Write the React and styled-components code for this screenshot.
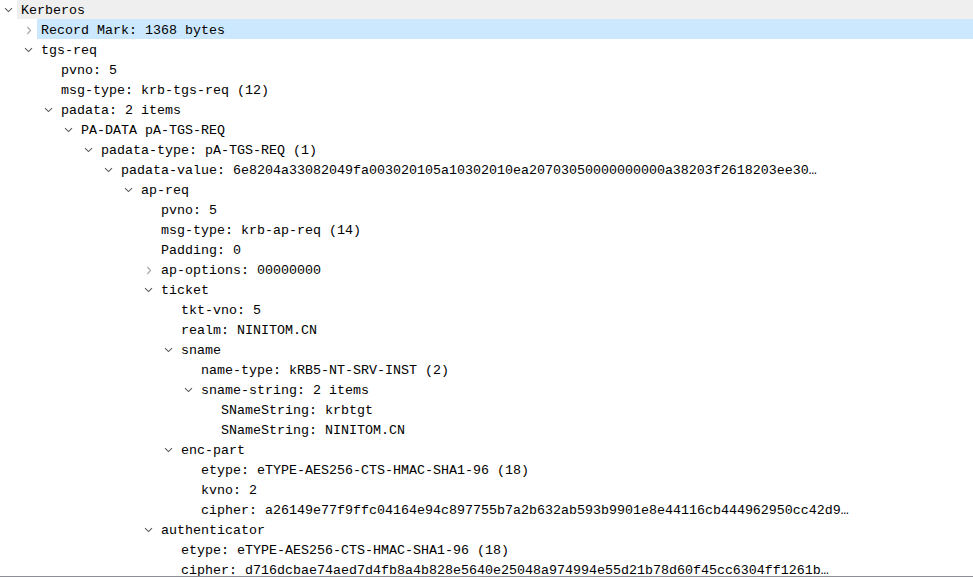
import styled, { createGlobalStyle } from "styled-components";

const GlobalStyle = createGlobalStyle`
  html, body {
    margin: 0;
    padding: 0;
    background: #ffffff;
  }
`;

const Tree = styled.div`
  width: 973px;
  height: 576px;
  overflow: hidden;
  border-bottom: 1px solid #8a8f99;
  background: #fff;
  font-family: "Liberation Mono", "DejaVu Sans Mono", monospace;
  font-size: 13.33px;
  color: #000;
`;

const Rows = styled.div`
  margin-top: -1px;
`;

const Row = styled.div`
  display: flex;
  align-items: center;
  height: 20px;
  padding-left: ${(p) => p.$level * 20}px;
  white-space: nowrap;
`;

const Toggle = styled.span`
  width: 17px;
  height: 20px;
  box-sizing: border-box;
  padding-top: 2px;
  flex: none;
  display: flex;
  align-items: center;
  justify-content: center;
  color: ${(p) => (p.$open ? "#5c5c5c" : "#a6a6a6")};
`;

const Label = styled.span`
  flex: 1;
  height: 20px;
  line-height: 24px;
  padding-left: 4px;
  background: ${(p) => (p.$selected ? "#cce8ff" : p.$hover ? "#efefef" : "transparent")};
  overflow: hidden;
`;

function Chevron({ open }) {
  return open ? (
    <svg width="9" height="6" viewBox="0 0 9 6">
      <path d="M1 1.2 L4.5 4.6 L8 1.2" fill="none" stroke="currentColor" strokeWidth="1.1" />
    </svg>
  ) : (
    <svg width="6" height="9" viewBox="0 0 6 9">
      <path d="M1.3 1 L4.6 4.5 L1.3 8" fill="none" stroke="currentColor" strokeWidth="1.1" />
    </svg>
  );
}

const rows = [
  [0, "Kerberos", "open", "hover"],
  [1, "Record Mark: 1368 bytes", "closed", "selected"],
  [1, "tgs-req", "open"],
  [2, "pvno: 5"],
  [2, "msg-type: krb-tgs-req (12)"],
  [2, "padata: 2 items", "open"],
  [3, "PA-DATA pA-TGS-REQ", "open"],
  [4, "padata-type: pA-TGS-REQ (1)", "open"],
  [5, "padata-value: 6e8204a33082049fa003020105a10302010ea20703050000000000a38203f2618203ee30…", "open"],
  [6, "ap-req", "open"],
  [7, "pvno: 5"],
  [7, "msg-type: krb-ap-req (14)"],
  [7, "Padding: 0"],
  [7, "ap-options: 00000000", "closed"],
  [7, "ticket", "open"],
  [8, "tkt-vno: 5"],
  [8, "realm: NINITOM.CN"],
  [8, "sname", "open"],
  [9, "name-type: kRB5-NT-SRV-INST (2)"],
  [9, "sname-string: 2 items", "open"],
  [10, "SNameString: krbtgt"],
  [10, "SNameString: NINITOM.CN"],
  [8, "enc-part", "open"],
  [9, "etype: eTYPE-AES256-CTS-HMAC-SHA1-96 (18)"],
  [9, "kvno: 2"],
  [9, "cipher: a26149e77f9ffc04164e94c897755b7a2b632ab593b9901e8e44116cb444962950cc42d9…"],
  [7, "authenticator", "open"],
  [8, "etype: eTYPE-AES256-CTS-HMAC-SHA1-96 (18)"],
  [8, "cipher: d716dcbae74aed7d4fb8a4b828e5640e25048a974994e55d21b78d60f45cc6304ff1261b…"],
];

export default function App() {
  return (
    <>
      <GlobalStyle />
      <Tree>
        <Rows>
          {rows.map(([level, text, state, mark], i) => (
            <Row key={i} $level={level}>
              <Toggle $open={state === "open"}>
                {state && <Chevron open={state === "open"} />}
              </Toggle>
              <Label $selected={mark === "selected"} $hover={mark === "hover"}>
                {text}
              </Label>
            </Row>
          ))}
        </Rows>
      </Tree>
    </>
  );
}
